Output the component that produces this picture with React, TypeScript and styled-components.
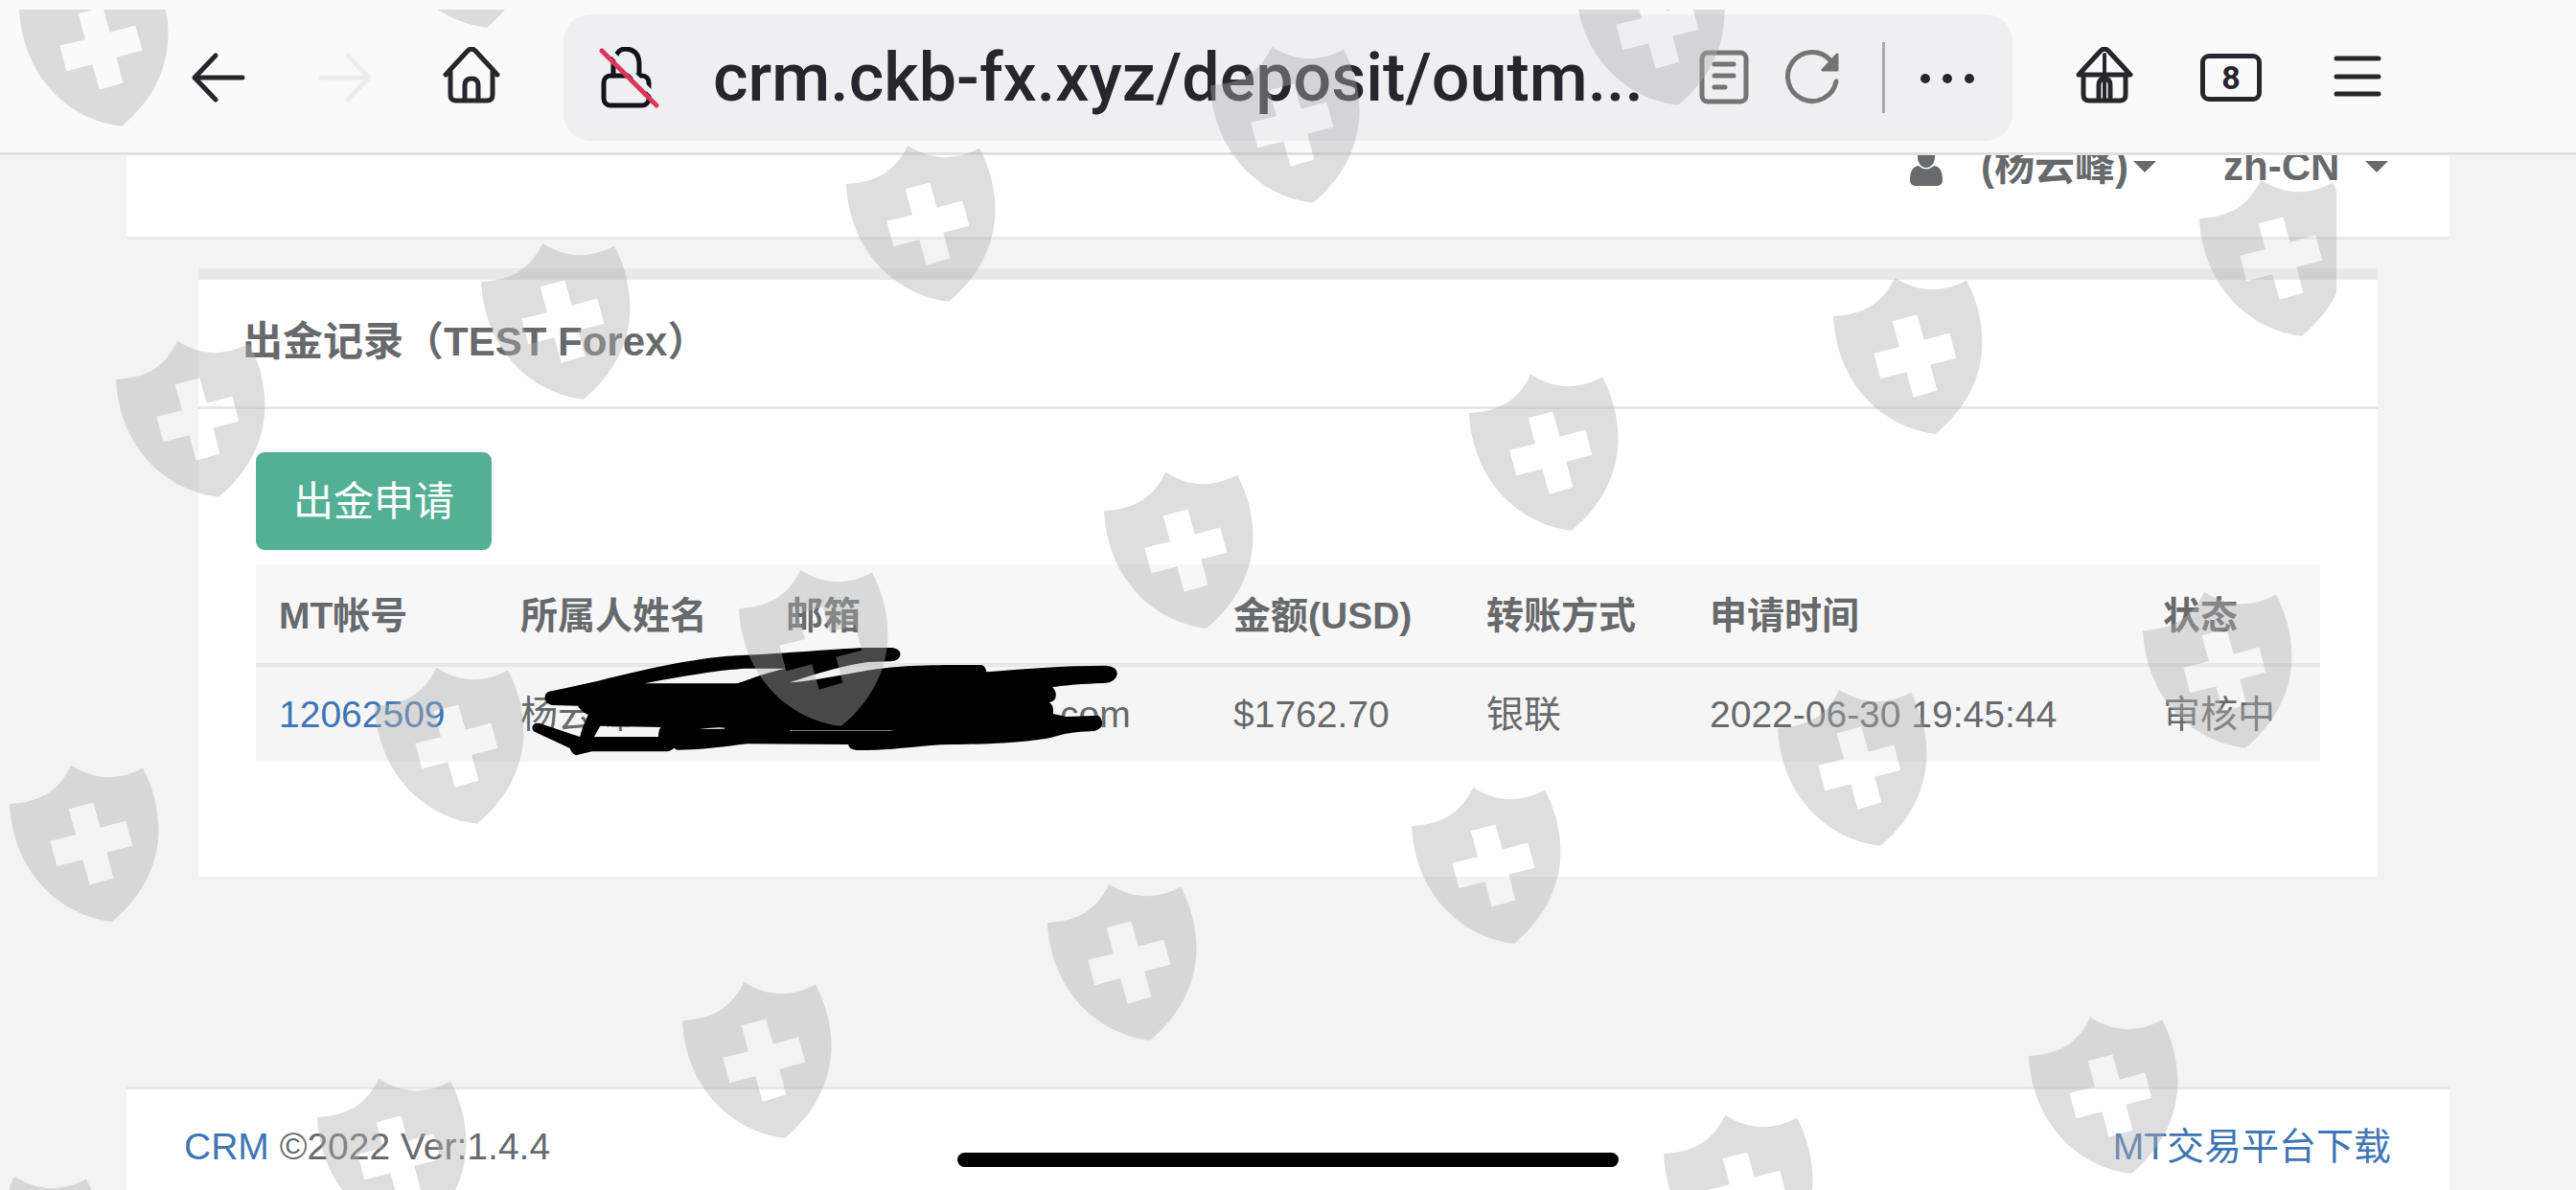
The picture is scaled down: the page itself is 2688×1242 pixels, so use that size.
import React from "react";
import styled, { createGlobalStyle } from "styled-components";

const INK = "#27262c";
const GREY = "#747474";
const TEXT = "#676a6c";
const LINK = "#3f76b4";
const RULE = "#e8e8e8";

const GlobalStyle = createGlobalStyle`
  *, *::before, *::after { box-sizing: border-box; }
  body {
    margin: 0;
    background: #f3f3f3;
    color: ${TEXT};
    font-family: "Liberation Sans", "Noto Sans CJK SC", sans-serif;
    font-size: 39px;
    line-height: 56px;
  }
  button, input, select { font: inherit; color: inherit; }
`;

const Screen = styled.div`
  position: relative;
  display: flex;
  flex-direction: column;
  min-height: 100vh;
  overflow: hidden;
`;

/* Browser toolbar */

const Toolbar = styled.header`
  position: relative;
  z-index: 1;
  display: flex;
  align-items: center;
  gap: 64px;
  padding: 15px 196px 12px;
  background: #fafafb;
  border-bottom: 3px solid #e0e0e1;
`;

const ToolGroup = styled.div`
  display: flex;
  gap: 68px;
`;

const IconButton = styled.button`
  display: flex;
  flex: none;
  width: 64px;
  height: 64px;
  padding: 0;
  border: 0;
  background: none;
`;

const Glyph = styled.svg<{ $tone?: string }>`
  flex: none;
  width: 64px;
  height: 64px;
  fill: none;
  stroke: ${(p) => p.$tone ?? INK};
  stroke-width: 5px;
  stroke-linecap: round;
  stroke-linejoin: round;
`;

const AddressBar = styled.div`
  display: flex;
  flex: 1;
  align-items: center;
  min-width: 0;
  height: 132px;
  padding: 0 36px;
  border-radius: 28px;
  background: #efeff1;
`;

const Address = styled.input`
  flex: 1;
  min-width: 0;
  margin: 0 20px 0 56px;
  padding: 0;
  border: 0;
  outline: 0;
  background: none;
  color: ${INK};
  font-family: Roboto, sans-serif;
  font-size: 70px;
  font-weight: 500;
  line-height: 84px;
`;

const AddressActions = styled.div`
  display: flex;
  flex: none;
  align-items: center;
  gap: 28px;
`;

const Divider = styled.span`
  width: 3px;
  height: 74px;
  margin: 0 5px 0 13px;
  background: #a9a9ab;
`;

const TabCount = styled.button`
  width: 64px;
  height: 50px;
  margin: 7px 0;
  padding: 0;
  border: 5px solid ${INK};
  border-radius: 9px;
  background: none;
  color: ${INK};
  font-family: Roboto, sans-serif;
  font-size: 34px;
  font-weight: 700;
  line-height: 40px;
`;

/* Web page */

const Page = styled.div`
  display: flex;
  flex: 1;
  flex-direction: column;
  margin: 0 132px;
`;

const NavBar = styled.nav`
  display: flex;
  align-items: center;
  justify-content: flex-end;
  gap: 70px;
  height: 150px;
  margin-top: -62px;
  padding: 0 64px;
  background: #fff;
  border-bottom: 3px solid ${RULE};
  font-size: 42px;
  font-weight: 700;
`;

const UserMenu = styled.button`
  display: flex;
  align-items: center;
  padding: 0;
  border: 0;
  background: none;
`;

const UserIcon = styled.svg`
  width: 34px;
  height: 40px;
  margin-right: 40px;
  fill: ${TEXT};
`;

const Caret = styled.svg<{ $gap: number }>`
  width: 24px;
  height: 12px;
  margin-left: ${(p) => p.$gap}px;
  fill: ${TEXT};
`;

const Language = styled.label`
  display: flex;
  align-items: center;
`;

const LanguageSelect = styled.select`
  appearance: none;
  padding: 0;
  border: 0;
  background: none;
`;

const Card = styled.main`
  margin: 30px 75px 0;
  border-top: 12px solid ${RULE};
  background: #fff;
`;

const CardTitle = styled.h1`
  margin: 0;
  padding: 37px 46px 39px;
  border-bottom: 3px solid ${RULE};
  font-size: 42px;
  font-weight: 700;
  line-height: 56px;
`;

const CardBody = styled.div`
  padding: 45px 60px 120px;
`;

const ApplyButton = styled.button`
  display: block;
  height: 102px;
  margin-bottom: 15px;
  padding: 2px 39px 0;
  border: 0;
  border-radius: 9px;
  background: #54b095;
  color: #fff;
  font-size: 42px;
`;

const TableArea = styled.div`
  position: relative;
`;

const Records = styled.table`
  width: 100%;
  border-collapse: collapse;
  table-layout: fixed;
  text-align: left;
  white-space: nowrap;
`;

const Col = styled.col<{ $share: number }>`
  width: ${(p) => p.$share}px;
`;

const HeadCell = styled.th`
  height: 105px;
  padding: 4px 24px 0;
  background: #f7f7f7;
  border-bottom: 4px solid ${RULE};
  font-weight: 700;
`;

const Cell = styled.td`
  height: 101px;
  padding: 0 24px;
  background: #f5f5f5;
`;

const EmailCell = styled(Cell)`
  padding-left: 310px;
`;

const Link = styled.a`
  color: ${LINK};
  text-decoration: none;
`;

const Scribble = styled.svg`
  position: absolute;
  top: -19px;
  left: 273px;
  width: 660px;
  height: 240px;
`;

const Footer = styled.footer`
  display: flex;
  justify-content: space-between;
  height: 108px;
  margin-top: auto;
  padding: 32px 61px 0 60px;
  border-top: 3px solid ${RULE};
  background: #fff;
`;

/* Overlays */

const HomeIndicator = styled.div`
  position: absolute;
  bottom: 24px;
  left: 50%;
  width: 690px;
  height: 15px;
  margin-left: -345px;
  border-radius: 8px;
  background: #000;
`;

const Watermark = styled.div`
  position: absolute;
  z-index: 2;
  inset: 10px 250px 0 10px;
  overflow: hidden;
  pointer-events: none;
`;

const Shield = styled.svg<{ $x: number; $y: number }>`
  position: absolute;
  left: ${(p) => p.$x}px;
  top: ${(p) => p.$y}px;
  width: 156px;
  height: 165px;
  fill: rgba(176, 176, 176, 0.41);
  fill-rule: evenodd;
`;

const SHIELDS: [number, number][] = [
  [10, -42], [391, -145],
  [111, 345], [492, 243], [873, 141], [1253, 38], [1634, -64],
  [0, 788], [381, 686], [761, 584], [1142, 482], [1523, 380], [1903, 279], [2285, 177],
  [-59, 1217], [321, 1115], [702, 1014], [1083, 912], [1463, 811], [1845, 709], [2226, 607],
  [1726, 1153], [2107, 1051],
];

const columns: [string, number][] = [
  ["MT帐号", 252],
  ["所属人姓名", 277],
  ["邮箱", 467],
  ["金额(USD)", 264],
  ["转账方式", 233],
  ["申请时间", 473],
  ["状态", 188],
];

export default function App() {
  return (
    <Screen>
      <GlobalStyle />
      <Toolbar>
        <ToolGroup>
          <IconButton aria-label="Back">
            <Glyph viewBox="0 0 64 64">
              <path d="M57 32H7M29 9L7 32L29 55" />
            </Glyph>
          </IconButton>
          <IconButton aria-label="Forward" disabled>
            <Glyph viewBox="0 0 64 64" $tone="#ededef">
              <path d="M7 32H57M35 9L57 32L35 55" />
            </Glyph>
          </IconButton>
          <IconButton aria-label="Home">
            <Glyph viewBox="0 0 64 64">
              <path d="M5 29L28 4Q32 0 36 4L59 29M10 26V50Q10 56 16 56H48Q54 56 54 50V26M25 56V40Q25 33 32 33T39 40V56" />
            </Glyph>
          </IconButton>
        </ToolGroup>

        <AddressBar>
          <Glyph viewBox="0 0 64 64" $tone="#141418">
            <path d="M16 30V12M19 9Q22 2 29 2Q43 3 43 18V30" />
            <rect x="6" y="30" width="47" height="31" rx="7" />
            <path d="M11 3L63 55" stroke="#efeff1" />
            <path d="M4 4L61 61" stroke="#d8385a" />
          </Glyph>
          <Address aria-label="Address" readOnly value="crm.ckb-fx.xyz/deposit/outm..." />
          <AddressActions>
            <IconButton aria-label="Reader view">
              <Glyph viewBox="0 0 64 64" $tone={GREY}>
                <rect x="9" y="6" width="46" height="51" rx="6" />
                <path d="M22 18H42M22 30H42M22 42H33" />
              </Glyph>
            </IconButton>
            <IconButton aria-label="Reload">
              <Glyph viewBox="0 0 64 64" $tone={GREY}>
                <path d="M57 36A25.500 25.500 0 1 1 51 14" />
                <path d="M58 8V24H43Z" fill={GREY} strokeWidth="3" />
              </Glyph>
            </IconButton>
            <Divider />
            <IconButton aria-label="More">
              <Glyph viewBox="0 0 64 64" $tone="none">
                <g fill={INK}>
                  <circle cx="9" cy="33" r="5" />
                  <circle cx="32" cy="33" r="5" />
                  <circle cx="55" cy="33" r="5" />
                </g>
              </Glyph>
            </IconButton>
          </AddressActions>
        </AddressBar>

        <ToolGroup>
          <IconButton aria-label="Home page">
            <Glyph viewBox="0 0 64 64">
              <path d="M5 29L28 4Q32 0 36 4L59 29Z" />
              <path d="M10 29V50Q10 56 16 56H48Q54 56 54 50V29M26 56V40Q26 33 32 33T38 40V56" />
              <path d="M32 8V56" strokeWidth="4" />
            </Glyph>
          </IconButton>
          <TabCount aria-label="Open tabs">8</TabCount>
          <IconButton aria-label="Menu">
            <Glyph viewBox="0 0 64 64">
              <path d="M10 12H54M10 31H54M10 49H54" />
            </Glyph>
          </IconButton>
        </ToolGroup>
      </Toolbar>

      <Page>
        <NavBar>
          <UserMenu>
            <UserIcon viewBox="0 0 34 40">
              <path d="M17 0C22 0 26 4 26 10S22 21 17 21S8 16 8 10S12 0 17 0ZM9 19Q17 26 25 19Q34 20 34 34Q34 40 27 40H7Q0 40 0 34Q0 20 9 19Z" />
            </UserIcon>
            (杨云峰)
            <Caret viewBox="0 0 24 12" $gap={5}>
              <path d="M0 0H24L12 12Z" />
            </Caret>
          </UserMenu>
          <Language>
            <LanguageSelect aria-label="Language" defaultValue="zh-CN">
              <option value="zh-CN">zh-CN</option>
            </LanguageSelect>
            <Caret viewBox="0 0 24 12" $gap={26}>
              <path d="M0 0H24L12 12Z" />
            </Caret>
          </Language>
        </NavBar>

        <Card>
          <CardTitle>出金记录（TEST Forex）</CardTitle>
          <CardBody>
            <ApplyButton>出金申请</ApplyButton>
            <TableArea>
              <Records>
                <colgroup>
                  {columns.map(([name, share]) => (
                    <Col key={name} $share={share} />
                  ))}
                </colgroup>
                <thead>
                  <tr>
                    {columns.map(([name]) => (
                      <HeadCell key={name} scope="col">{name}</HeadCell>
                    ))}
                  </tr>
                </thead>
                <tbody>
                  <tr>
                    <Cell><Link href="#account">12062509</Link></Cell>
                    <Cell>杨云峰</Cell>
                    <EmailCell>com</EmailCell>
                    <Cell>$1762.70</Cell>
                    <Cell>银联</Cell>
                    <Cell>2022-06-30 19:45:44</Cell>
                    <Cell>审核中</Cell>
                  </tr>
                </tbody>
              </Records>
              <Scribble viewBox="0 0 1568 720" preserveAspectRatio="none" aria-hidden="true">
                <path
                  fillRule="evenodd"
                  d="M68 475C68 450 85 455 110 447L200 422C350 375 450 350 540 343C680 335 780 322 860 318L930 318Q949 322 949 340Q947 360 925 361L870 363C820 370 750 395 675 427C750 420 850 390 900 383C970 372 1020 374 1060 372L1150 372Q1160 375 1163 394C1250 385 1350 374 1460 374Q1487 378 1487 400Q1483 428 1455 429C1400 431 1360 436 1326 441Q1340 460 1332 480Q1328 488 1318 489Q1330 498 1328 525Q1345 530 1360 534Q1400 532 1440 530Q1453 545 1448 565Q1440 580 1420 580Q1370 582 1340 593C1300 610 1200 620 1050 622C980 628 920 639 870 639L840 639Q822 637 820 621L570 619C500 630 440 639 395 638L388 632Q380 643 365 643L185 643L145 655Q135 650 130 633L40 580Q33 570 40 558Q50 550 62 558L155 597Q158 575 175 528Q155 515 150 500L85 498Q68 492 68 475ZM315 430L545 430C590 410 620 395 665 383L560 383C460 395 380 415 315 430ZM205 563L355 567Q350 575 349 597L190 597ZM450 573Q500 565 515 569L512 572ZM675 577H935L925 578H675Z"
                />
              </Scribble>
            </TableArea>
          </CardBody>
        </Card>

        <Footer>
          <span><Link href="#crm">CRM</Link> ©2022 Ver:1.4.4</span>
          <Link href="#download">MT交易平台下载</Link>
        </Footer>
      </Page>

      <HomeIndicator />
      <Watermark aria-hidden="true">
        {SHIELDS.map(([x, y]) => (
          <Shield key={`${x},${y}`} $x={x} $y={y} viewBox="0 0 468 494">
            <path d="M0 123C90 117 150 90 193 2C265 50 345 50 417 10C490 150 500 340 321 491C150 470 10 330 0 123ZM185 138L207 219L127 239L148 318L229 297L251 377L325 355L304 275L385 254L364 175L284 197L262 118Z" />
          </Shield>
        ))}
      </Watermark>
    </Screen>
  );
}
